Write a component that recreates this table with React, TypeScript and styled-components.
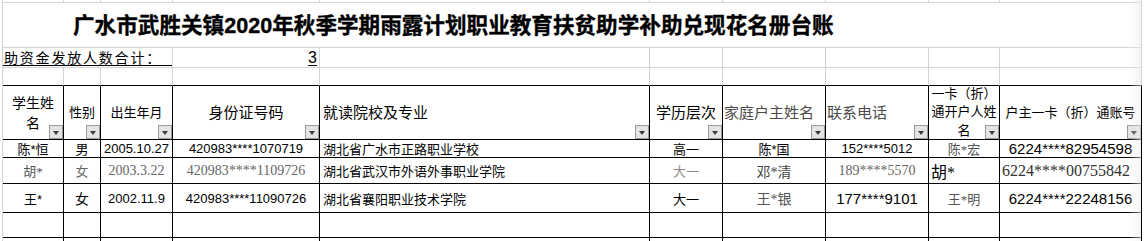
import React from 'react';
import styled, { createGlobalStyle } from 'styled-components';

const GRID = '#d4d4d4';
const INK = '#000';
const SANS = '"Liberation Sans", "Noto Sans CJK SC", sans-serif';
const SERIF = '"Liberation Serif", "Noto Sans CJK SC", serif';

type Line = 'grid' | 'ink';
type Face = 'sans' | 'serif';
type Align = 'center' | 'left' | 'right';

const GlobalStyle = createGlobalStyle`
  html, body { margin: 0; padding: 0; background: #fff; }
  body {
    width: 1144px;
    height: 241px;
    overflow: hidden;
    font-family: ${SANS};
    color: #000;
  }
`;

const Sheet = styled.div`
  position: relative;
  display: grid;
  grid-template-columns: 61px 37px 72px 147px 330px 73px 103px 103px 71px 142px;
  grid-template-rows: 3px 45px 20px 18px 54px 18px 26px 29px 25px 10px;
  width: 1139px;
  margin-left: 2px;
  border-left: 1px solid ${GRID};

  &::after {
    content: '';
    position: absolute;
    top: 0;
    bottom: 0;
    right: 1px;
    width: 13px;
    background: linear-gradient(to right, rgba(235, 235, 235, 0), rgba(235, 235, 235, 0.55));
    pointer-events: none;
  }
`;

const Cell = styled.div<{ $right?: Line; $bottom?: Line }>`
  box-sizing: border-box;
  min-width: 0;
  display: flex;
  align-items: center;
  overflow: hidden;
  white-space: nowrap;
  border-right: 1px solid ${(p) => (p.$right === 'ink' ? INK : GRID)};
  border-bottom: 1px solid ${(p) => (p.$bottom === 'ink' ? INK : GRID)};
`;

const TitleCell = styled(Cell)`
  grid-column: 1 / -1;
  padding: 0 0 3px 70px;
  font-family: ${SANS};
  font-size: 21.6px;
  font-weight: 700;
  -webkit-text-stroke: 0.35px #000;
`;

const LabelCell = styled(Cell)`
  grid-column: 1 / 4;
  align-items: stretch;
  padding-bottom: 1px;
`;

const LabelText = styled.div`
  flex: 1;
  display: flex;
  align-items: flex-end;
  border-bottom: 1px solid ${INK};
  padding-left: 1px;
  font-family: "Noto Sans CJK SC", sans-serif;
  font-size: 14px;
  line-height: 16px;
  letter-spacing: 1.8px;
`;

const CountCell = styled(Cell)`
  justify-content: flex-end;
  padding-right: 2px;
  font-family: ${SANS};
  font-size: 16px;
  line-height: 18px;
`;

const Underlined = styled.span`
  text-decoration: underline;
  text-underline-offset: 2px;
  text-decoration-thickness: 1px;
`;

const justify = (a: Align) => (a === 'left' ? 'flex-start' : a === 'right' ? 'flex-end' : 'center');

const HeadCell = styled(Cell)<{ $size: number; $tone: string; $align: Align; $pad: number; $lh: number }>`
  position: relative;
  justify-content: ${(p) => justify(p.$align)};
  padding: 0 ${(p) => (p.$align === 'center' ? 1 : 0)}px 0 ${(p) => p.$pad}px;
  font-family: ${SANS};
  font-size: ${(p) => p.$size}px;
  line-height: ${(p) => p.$lh}px;
  color: ${(p) => p.$tone};
  text-align: ${(p) => p.$align};
  white-space: pre-line;
`;

const Filter = styled.span`
  position: absolute;
  right: 0;
  bottom: 0;
  box-sizing: border-box;
  width: 14px;
  height: 14px;
  background: #e4e4e4;
  border: 1px solid #9c9c9c;

  &::after {
    content: '';
    position: absolute;
    left: 2.5px;
    top: 5px;
    border-left: 3.5px solid transparent;
    border-right: 3.5px solid transparent;
    border-top: 4px solid #3c3c3c;
  }
`;

const DataCell = styled(Cell)<{ $face: Face; $size: number; $tone: string; $align: Align; $pad: number }>`
  justify-content: ${(p) => justify(p.$align)};
  padding-left: ${(p) => p.$pad}px;
  font-family: ${(p) => (p.$face === 'serif' ? SERIF : SANS)};
  font-size: ${(p) => p.$size}px;
  color: ${(p) => p.$tone};
`;

interface Head {
  text: string;
  size: number;
  tone?: string;
  align?: Align;
  pad?: number;
  lh?: number;
}

const heads: Head[] = [
  { text: '学生姓\n名', size: 14, lh: 20 },
  { text: '性别', size: 13 },
  { text: '出生年月', size: 13 },
  { text: '身份证号码', size: 15 },
  { text: '就读院校及专业', size: 15, align: 'left', pad: 3 },
  { text: '学历层次', size: 15 },
  { text: '家庭户主姓名', size: 15, tone: '#4a4a4a', align: 'left', pad: 1 },
  { text: '联系电话', size: 15, tone: '#4a4a4a', align: 'left', pad: 1 },
  { text: '一卡（折）\n通开户人姓\n名', size: 13, lh: 18.5 },
  { text: '户主一卡（折）通账号', size: 13 },
];

interface Entry {
  text: string;
  face?: Face;
  size?: number;
  tone?: string;
  align?: Align;
  pad?: number;
}

const rows: Entry[][] = [
  [
    { text: '陈*恒' },
    { text: '男' },
    { text: '2005.10.27' },
    { text: '420983****1070719' },
    { text: '湖北省广水市正路职业学校', align: 'left', pad: 3 },
    { text: '高一' },
    { text: '陈*国' },
    { text: '152****5012' },
    { text: '陈*宏', face: 'serif', tone: '#555' },
    { text: '6224****82954598', size: 15 },
  ],
  [
    { text: '胡*', face: 'serif', tone: '#555' },
    { text: '女', face: 'serif', tone: '#666' },
    { text: '2003.3.22', face: 'serif', size: 14, tone: '#666' },
    { text: '420983****1109726', face: 'serif', size: 14, tone: '#666' },
    { text: '湖北省武汉市外语外事职业学院', align: 'left', pad: 3 },
    { text: '大一', tone: '#888' },
    { text: '邓*清', face: 'serif', size: 14, tone: '#444' },
    { text: '189****5570', face: 'serif', size: 14, tone: '#666' },
    { text: '胡*', face: 'serif', size: 16, align: 'left', pad: 2 },
    { text: '6224****00755842', face: 'serif', size: 16, tone: '#333', align: 'left', pad: 2 },
  ],
  [
    { text: '王*' },
    { text: '女', size: 14 },
    { text: '2002.11.9' },
    { text: '420983****11090726' },
    { text: '湖北省襄阳职业技术学院', align: 'left', pad: 3 },
    { text: '大一' },
    { text: '王*银', face: 'serif', size: 14, tone: '#555' },
    { text: '177****9101', size: 15 },
    { text: '王*明', face: 'serif', tone: '#555' },
    { text: '6224****22248156', size: 15 },
  ],
  Array.from({ length: 10 }, () => ({ text: '' })),
  Array.from({ length: 10 }, () => ({ text: '' })),
];

const cols = Array.from({ length: 10 }, (_, i) => i);

export default function App() {
  return (
    <>
      <GlobalStyle />
      <Sheet>
        {cols.map((i) => (
          <Cell key={`top-${i}`} />
        ))}

        <TitleCell>广水市武胜关镇2020年秋季学期雨露计划职业教育扶贫助学补助兑现花名册台账</TitleCell>

        <LabelCell>
          <LabelText>助资金发放人数合计：</LabelText>
        </LabelCell>
        <CountCell>
          <Underlined>3</Underlined>
        </CountCell>
        {cols.slice(4).map((i) => (
          <Cell key={`sum-${i}`} />
        ))}

        {cols.map((i) => (
          <Cell key={`gap-${i}`} $bottom="ink" />
        ))}

        {heads.map((h, i) => (
          <HeadCell
            key={`head-${i}`}
            $right="ink"
            $bottom="ink"
            $size={h.size}
            $tone={h.tone ?? '#000'}
            $align={h.align ?? 'center'}
            $pad={h.pad ?? 1}
            $lh={h.lh ?? 20}
          >
            {h.text}
            <Filter />
          </HeadCell>
        ))}

        {rows.map((row, r) =>
          row.map((c, i) => (
            <DataCell
              key={`row-${r}-${i}`}
              $right="ink"
              $bottom="ink"
              $face={c.face ?? 'sans'}
              $size={c.size ?? 13}
              $tone={c.tone ?? '#000'}
              $align={c.align ?? 'center'}
              $pad={c.pad ?? 0}
            >
              {c.text}
            </DataCell>
          ))
        )}
      </Sheet>
    </>
  );
}
